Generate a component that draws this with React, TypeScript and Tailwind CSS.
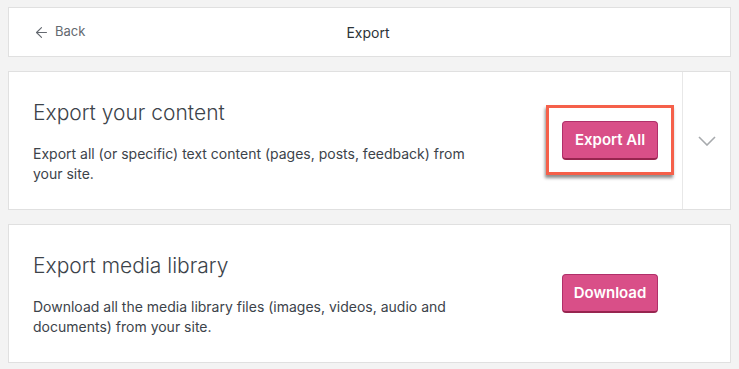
import { ArrowLeft } from 'lucide-react';

function Chevron() {
  return (
    <svg width="18" height="10" viewBox="0 0 18 10" fill="none">
      <polyline points="1,1 9,9 17,1" stroke="#a7aaad" strokeWidth="1.6" />
    </svg>
  );
}

function PinkButton({ label }: { label: string }) {
  return (
    <button className="h-[39px] w-[96px] rounded-[4px] border border-[#b0306a] border-b-[2px] border-b-[#97254f] bg-[#d94f88] text-[15px] font-semibold text-white">
      {label}
    </button>
  );
}

function Section({
  title,
  description,
  action,
  highlight,
  expandable,
}: {
  title: string;
  description: string;
  action: string;
  highlight?: boolean;
  expandable?: boolean;
}) {
  return (
    <div className="flex h-[139px] border border-[#e0e0e0] bg-white">
      <div className="flex flex-1 items-center justify-between pl-[24px] pr-[24px]">
        <div className="w-[440px] pt-[1px]">
          <h2 className="text-[21px] font-light leading-[28px] text-[#3c434a]">{title}</h2>
          <p className="mt-[17px] text-[14px] leading-[20px] text-[#3c434a]">{description}</p>
        </div>
        <div className="relative">
          <PinkButton label={action} />
          {highlight && (
            <div className="absolute -inset-x-[16px] -top-[16px] -bottom-[15px] border-[3px] border-[#f5604a] shadow-[-1px_3px_3px_rgba(0,0,0,0.45)]" />
          )}
        </div>
      </div>
      <div
        className={
          expandable
            ? 'flex w-[48px] items-center justify-center border-l border-[#e8e8e8]'
            : 'w-[48px]'
        }
      >
        {expandable && <Chevron />}
      </div>
    </div>
  );
}

export default function App() {
  return (
    <div
      className="min-h-screen bg-[#f3f3f3] px-[8px] pt-[7px]"
      style={{ fontFamily: 'Inter, "Noto Sans", sans-serif' }}
    >
      <div className="grid h-[50px] grid-cols-[1fr_auto_1fr] items-center border border-[#e0e0e0] bg-white pl-[24px] pr-[27px]">
        <div className="flex items-center gap-[5px] text-[13px] text-[#646970]">
          <ArrowLeft size={17} strokeWidth={1.6} />
          <span>Back</span>
        </div>
        <div className="text-[14px] text-[#2c3338]">Export</div>
        <div />
      </div>
      <div className="mt-[14px] flex flex-col gap-[14px]">
        <Section
          title="Export your content"
          description="Export all (or specific) text content (pages, posts, feedback) from your site."
          action="Export All"
          highlight
          expandable
        />
        <Section
          title="Export media library"
          description="Download all the media library files (images, videos, audio and documents) from your site."
          action="Download"
        />
      </div>
    </div>
  );
}
